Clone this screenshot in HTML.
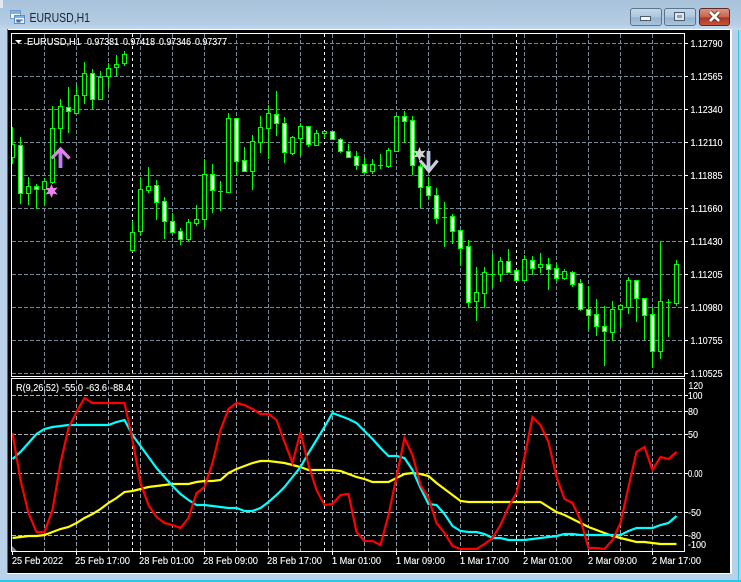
<!DOCTYPE html>
<html>
<head>
<meta charset="utf-8">
<title>EURUSD,H1</title>
<style>
html,body{margin:0;padding:0;background:#b9d2ea;width:741px;height:582px;overflow:hidden}
svg{display:block}
text{font-family:"Liberation Sans",sans-serif;font-size:10.500px;fill:#fff;stroke:#fff;stroke-width:.12px}
</style>
</head>
<body>
<svg width="741" height="582" viewBox="0 0 741 582" xmlns="http://www.w3.org/2000/svg">
<defs>
<linearGradient id="bg" x1="0" y1="0" x2="0" y2="1"><stop offset="0" stop-color="#a7c2da"/><stop offset=".8" stop-color="#b4cde4"/><stop offset="1" stop-color="#c5d9ed"/></linearGradient>
<linearGradient id="btn" x1="0" y1="0" x2="0" y2="1"><stop offset="0" stop-color="#c4d8ea"/><stop offset=".5" stop-color="#adc6dd"/><stop offset=".55" stop-color="#94b3cf"/><stop offset="1" stop-color="#a9c5de"/></linearGradient>
<linearGradient id="cls" x1="0" y1="0" x2="0" y2="1"><stop offset="0" stop-color="#dd9686"/><stop offset=".5" stop-color="#c9624e"/><stop offset=".55" stop-color="#ad3520"/><stop offset="1" stop-color="#c25843"/></linearGradient>
<clipPath id="pc"><rect x="12" y="34" width="672" height="342"/></clipPath>
<clipPath id="ic"><rect x="12" y="380" width="672" height="171"/></clipPath>
</defs>

<rect width="741" height="582" fill="#b9d2ea"/>
<rect width="741" height="30" fill="url(#bg)"/>
<rect x="0" y="580" width="741" height="2" fill="#2cc6e6"/>
<rect x="738" y="30" width="1" height="552" fill="#2cc6e6"/>
<rect x="0" y="0" width="3" height="8" fill="#dfe9f2"/>

<!-- window client -->
<rect x="7" y="29" width="725" height="545" fill="#fff"/>
<rect x="7" y="29" width="1" height="544" fill="#666"/>
<rect x="8" y="30" width="722" height="543" fill="#000"/>

<!-- title -->
<g shape-rendering="crispEdges">
<rect x="10.500" y="10.500" width="10" height="8" fill="#fff" stroke="#6f9bd0"/>
<rect x="11" y="11" width="9" height="3" fill="#7fb0e4"/>
<rect x="14.500" y="15.500" width="10" height="8" fill="#eef5fc" stroke="#5f8cc4"/>
<rect x="15" y="16" width="9" height="2" fill="#7fb0e4"/>
<path d="M16 20h1v2h1v-2h1v2h1v-2h2v1" fill="none" stroke="#3d6fae"/>
</g>
<text x="29.500" y="22" style="font-size:13px;fill:#1c2233;stroke:none" textLength="60.500" lengthAdjust="spacingAndGlyphs">EURUSD,H1</text>

<!-- buttons -->
<rect x="630.500" y="8.500" width="31" height="17" rx="2.500" fill="url(#btn)" stroke="#5f7488"/>
<rect x="664.500" y="8.500" width="31" height="17" rx="2.500" fill="url(#btn)" stroke="#5f7488"/>
<rect x="699.500" y="8.500" width="30" height="17" rx="2.500" fill="url(#cls)" stroke="#5c2a26"/>
<g shape-rendering="crispEdges">
<rect x="640.500" y="16.500" width="10" height="4" fill="#f2f5f8" stroke="#4a5b6c"/>
<rect x="674.500" y="12.500" width="10" height="8" fill="#dfe6ee" stroke="#4a5b6c"/>
<rect x="677" y="15" width="5" height="3" fill="#8ea6bc"/>
</g>
<path d="M710 12l9 9M719 12l-9 9" stroke="#4a2620" stroke-width="4.400" fill="none"/>
<path d="M710 12l9 9M719 12l-9 9" stroke="#fff" stroke-width="2.800" fill="none"/>

<!-- price panel grid -->
<g shape-rendering="crispEdges" fill="none">
<path stroke="#778899" stroke-dasharray="4 2" d="M12 43.500H684M12 76.500H684M12 109.500H684M12 142.500H684M12 175.500H684M12 208.500H684M12 241.500H684M12 274.500H684M12 307.500H684M12 340.500H684M12 373.500H684"/>
<path stroke="#778899" stroke-dasharray="4 2" d="M44.500 34V376M76.500 34V376M108.500 34V376M140.500 34V376M172.500 34V376M204.500 34V376M236.500 34V376M268.500 34V376M300.500 34V376M332.500 34V376M364.500 34V376M396.500 34V376M428.500 34V376M460.500 34V376M492.500 34V376M524.500 34V376M556.500 34V376M588.500 34V376M620.500 34V376M652.500 34V376"/>
<path stroke="#fff" stroke-dasharray="3 3" d="M132.500 34V376M324.500 34V376M516.500 34V376"/>
</g>

<!-- candles -->
<g clip-path="url(#pc)" shape-rendering="crispEdges">
<path fill="none" stroke="#00ff00" d="M12.500 127V164M20.500 137V204M28.500 177V205M36.500 184V209M44.500 178V206M52.500 106V184M60.500 99V143M68.500 87V133M76.500 85V113M84.500 62V104M92.500 69V109M100.500 71V99M108.500 63V88M116.500 55V76M124.500 51V66M132.500 221V252M140.500 177V235M148.500 167V193M156.500 180V220M164.500 197V239M172.500 213V234M180.500 228V245M188.500 219V241M196.500 205V226M204.500 159V227M212.500 164V213M220.500 181V211M228.500 113V193M236.500 118V176M244.500 147V172M252.500 135V190M260.500 116V153M268.500 105V159M276.500 91V136M284.500 117V163M292.500 136V155M300.500 123V156M308.500 126V147M316.500 130V146M324.500 131V138M332.500 131V139M340.500 138V153M348.500 144V157M356.500 151V170M364.500 157V172M372.500 159V174M380.500 154V169M388.500 148V168M396.500 115V151M404.500 111V143M412.500 116V175M420.500 164V208M428.500 177V199M436.500 188V224M444.500 202V247M452.500 214V244M460.500 230V265M468.500 240V308M476.500 267V321M484.500 267V308M492.500 254V288M500.500 257V282M508.500 249V273M516.500 270V280M524.500 255V280M532.500 256V275M540.500 253V273M548.500 258V290M556.500 263V281M564.500 269V280M572.500 271V287M580.500 279V311M588.500 286V330M596.500 299V336M604.500 306V366M612.500 301V341M620.500 304V328M628.500 277V314M636.500 280V322M644.500 298V340M652.500 308V368M660.500 242V359M668.500 299V337M676.500 260V306"/>
<path fill="#000" stroke="#00ff00" d="M10.500 144.500h4v13h-4zM26.500 186.500h4v7h-4zM42.500 181.500h4v8h-4zM50.500 128.500h4v54h-4zM58.500 106.500h4v22h-4zM74.500 95.500h4v18h-4zM82.500 73.500h4v22h-4zM98.500 77.500h4v22h-4zM106.500 68.500h4v8h-4zM114.500 64.500h4v3h-4zM122.500 54.500h4v9h-4zM130.500 232.500h4v18h-4zM138.500 189.500h4v42h-4zM146.500 186.500h4v4h-4zM186.500 222.500h4v17h-4zM194.500 219.500h4v4h-4zM202.500 174.500h4v45h-4zM226.500 118.500h4v74h-4zM250.500 141.500h4v30h-4zM258.500 127.500h4v15h-4zM266.500 113.500h4v15h-4zM290.500 137.500h4v16h-4zM298.500 126.500h4v12h-4zM314.500 133.500h4v12h-4zM322.500 131.500h4v2h-4zM370.500 164.500h4v7h-4zM386.500 150.500h4v16h-4zM394.500 116.500h4v35h-4zM474.500 292.500h4v9h-4zM482.500 272.500h4v21h-4zM498.500 261.500h4v13h-4zM522.500 259.500h4v21h-4zM538.500 264.500h4v3h-4zM562.500 271.500h4v7h-4zM610.500 309.500h4v23h-4zM618.500 305.500h4v4h-4zM626.500 280.500h4v27h-4zM658.500 301.500h4v50h-4zM674.500 264.500h4v39h-4z"/>
<path fill="#fff" stroke="#00ff00" d="M18.500 145.500h4v48h-4zM34.500 186.500h4v3h-4zM66.500 107.500h4v4h-4zM90.500 73.500h4v26h-4zM154.500 185.500h4v17h-4zM162.500 201.500h4v20h-4zM170.500 221.500h4v11h-4zM178.500 231.500h4v8h-4zM210.500 174.500h4v16h-4zM234.500 118.500h4v43h-4zM242.500 160.500h4v11h-4zM274.500 114.500h4v9h-4zM282.500 123.500h4v29h-4zM306.500 126.500h4v18h-4zM330.500 131.500h4v8h-4zM338.500 139.500h4v12h-4zM346.500 151.500h4v6h-4zM354.500 156.500h4v9h-4zM362.500 164.500h4v8h-4zM402.500 116.500h4v5h-4zM410.500 120.500h4v45h-4zM418.500 166.500h4v21h-4zM426.500 186.500h4v9h-4zM434.500 195.500h4v23h-4zM450.500 216.500h4v15h-4zM458.500 230.500h4v18h-4zM466.500 246.500h4v56h-4zM506.500 261.500h4v11h-4zM514.500 270.500h4v10h-4zM530.500 260.500h4v8h-4zM546.500 264.500h4v5h-4zM554.500 268.500h4v10h-4zM570.500 272.500h4v12h-4zM578.500 283.500h4v26h-4zM586.500 309.500h4v6h-4zM594.500 314.500h4v12h-4zM602.500 326.500h4v5h-4zM634.500 280.500h4v18h-4zM642.500 298.500h4v17h-4zM650.500 314.500h4v37h-4z"/>
<path fill="none" stroke="#00ff00" d="M218 191.500h5M378 165.500h5M442 217.500h5M490 274.500h5M666 302.500h5"/>
</g>

<!-- arrows and stars -->
<path d="M60.500 168V150" stroke="#c47cf2" stroke-width="3.800" fill="none"/>
<path d="M51.500 158.500L60.500 149L69.500 158.500" stroke="#e082ea" stroke-width="3.200" fill="none"/>
<polygon points="51.500,184 53.200,188.200 57.800,187.400 54.800,191 57.800,194.600 53.200,193.800 51.500,198 49.800,193.800 45.200,194.600 48.200,191 45.200,187.400 49.800,188.200" fill="#ee82ee"/>
<polygon points="419.500,147 421.200,151.200 425.800,150.400 422.800,154 425.800,157.600 421.200,156.800 419.500,161 417.800,156.800 413.200,157.600 416.200,154 413.200,150.400 417.800,151.200" fill="#d3d3d3"/>
<path d="M428.500 151V170" stroke="#b9c6e0" stroke-width="3.800" fill="none"/>
<path d="M420 160.500L429 171L437.500 160.500" stroke="#c8d0e0" stroke-width="3.200" fill="none"/>

<!-- indicator grid -->
<g shape-rendering="crispEdges" fill="none">
<path stroke="#aab4bd" stroke-dasharray="4 2" d="M12 395.500H684M12 411.500H684M12 434.500H684M12 473.500H684M12 512.500H684M12 535.500H684"/>
<path stroke="#8f9dab" stroke-dasharray="4 2" d="M44.500 380V551M76.500 380V551M108.500 380V551M140.500 380V551M172.500 380V551M204.500 380V551M236.500 380V551M268.500 380V551M300.500 380V551M332.500 380V551M364.500 380V551M396.500 380V551M428.500 380V551M460.500 380V551M492.500 380V551M524.500 380V551M556.500 380V551M588.500 380V551M620.500 380V551M652.500 380V551"/>
<path stroke="#fff" stroke-dasharray="3 3" d="M132.500 380V551M324.500 380V551M516.500 380V551"/>
</g>
<polygon points="12,546 17,551 12,551" fill="#778899"/>

<!-- indicator lines -->
<g clip-path="url(#ic)" fill="none" stroke-width="2.200" stroke-linejoin="miter">
<polyline stroke="#ffff00" points="12.500,538 20.500,537 28.500,536 36.500,536 44.500,535 52.500,532 60.500,529 68.500,527 76.500,523 84.500,518 92.500,514 100.500,509 108.500,503 116.500,498 124.500,492 132.500,491 140.500,489 148.500,487 156.500,486 164.500,485 172.500,484 180.500,484 188.500,484 196.500,482 204.500,481 212.500,481 220.500,480 228.500,473 236.500,469 244.500,466 252.500,463 260.500,461 268.500,461 276.500,462 284.500,463 292.500,465 300.500,467 308.500,470 316.500,470 324.500,470 332.500,470 340.500,471 348.500,474 356.500,477 364.500,479 372.500,482 380.500,482 388.500,482 396.500,478 404.500,474 412.500,473 420.500,474 428.500,476 436.500,483 444.500,489 452.500,495 460.500,501 468.500,502 476.500,502 484.500,502 492.500,502 500.500,502 508.500,502 516.500,502 524.500,502 532.500,502 540.500,502 548.500,507 556.500,512 564.500,515 572.500,519 580.500,523 588.500,527 596.500,530 604.500,533 612.500,536 620.500,538 628.500,540 636.500,542 644.500,542 652.500,543 660.500,544 668.500,544 676.500,544"/>
<polyline stroke="#00ffff" points="12.500,459 20.500,452 28.500,443 36.500,434 44.500,429 52.500,427 60.500,426 68.500,425 76.500,425 84.500,425 92.500,425 100.500,425 108.500,425 116.500,422 124.500,420 132.500,435 140.500,446 148.500,457 156.500,468 164.500,477 172.500,486 180.500,494 188.500,500 196.500,505 204.500,505 212.500,506 220.500,507 228.500,508 236.500,508 244.500,511 252.500,511 260.500,508 268.500,502 276.500,495 284.500,487 292.500,477 300.500,467 308.500,453 316.500,440 324.500,427 332.500,413 340.500,416 348.500,419 356.500,423 364.500,431 372.500,439 380.500,448 388.500,456 396.500,456 404.500,458 412.500,470 420.500,488 428.500,504 436.500,505 444.500,514 452.500,526 460.500,531 468.500,532 476.500,532 484.500,534 492.500,538 500.500,538 508.500,540 516.500,540 524.500,540 532.500,539 540.500,538 548.500,537 556.500,536 564.500,534 572.500,534 580.500,535 588.500,535 596.500,535 604.500,535 612.500,535 620.500,535 628.500,531 636.500,528 644.500,528 652.500,528 660.500,525 668.500,523 676.500,516"/>
<polyline stroke="#ff0000" points="12.500,433 20.500,480 28.500,513 36.500,532 44.500,532 52.500,510 60.500,463 68.500,428 76.500,412 84.500,398 92.500,403 100.500,403 108.500,403 116.500,403 124.500,403 132.500,440 140.500,483 148.500,505 156.500,517 164.500,523 172.500,525 180.500,528 188.500,518 196.500,493 204.500,487 212.500,463 220.500,430 228.500,409 236.500,403 244.500,405 252.500,409 260.500,414 268.500,414 276.500,420 284.500,442 292.500,463 300.500,432 308.500,465 316.500,490 324.500,505 332.500,504 340.500,495 348.500,494 356.500,532 364.500,541 372.500,541 380.500,545 388.500,515 396.500,477 404.500,438 412.500,455 420.500,485 428.500,498 436.500,523 444.500,533 452.500,546 460.500,549 468.500,549 476.500,549 484.500,544 492.500,538 500.500,525 508.500,507 516.500,493 524.500,457 532.500,417 540.500,425 548.500,442 556.500,477 564.500,499 572.500,503 580.500,520 588.500,548 596.500,548 604.500,549 612.500,540 620.500,523 628.500,487 636.500,452 644.500,447 652.500,470 660.500,457 668.500,459 676.500,452"/>
</g>

<!-- frames -->
<g shape-rendering="crispEdges" fill="none" stroke="#fff">
<path d="M11.500 33.500H684.500V376.500H11.500ZM11.500 378.500H684.500V551.500H11.500Z"/>
<path d="M685 43.500h3M685 76.500h3M685 109.500h3M685 142.500h3M685 175.500h3M685 208.500h3M685 241.500h3M685 274.500h3M685 307.500h3M685 340.500h3M685 373.500h3M685 395.500h3M685 411.500h3M685 434.500h3M685 473.500h3M685 512.500h3M685 535.500h3"/>
<path d="M12.500 552v3M76.500 552v3M140.500 552v3M204.500 552v3M268.500 552v3M332.500 552v3M396.500 552v3M460.500 552v3M524.500 552v3M588.500 552v3M652.500 552v3"/>
</g>

<!-- header labels -->
<polygon points="15,40 22,40 18.500,43.500" fill="#fff"/>
<g lengthAdjust="spacingAndGlyphs">
<text x="27" y="45" textLength="54" lengthAdjust="spacingAndGlyphs">EURUSD,H1</text>
<text x="87" y="45" textLength="32" lengthAdjust="spacingAndGlyphs">0.97381</text>
<text x="123" y="45" textLength="32" lengthAdjust="spacingAndGlyphs">0.97418</text>
<text x="159" y="45" textLength="32" lengthAdjust="spacingAndGlyphs">0.97346</text>
<text x="195" y="45" textLength="32" lengthAdjust="spacingAndGlyphs">0.97377</text>

<text x="16" y="391" textLength="43" lengthAdjust="spacingAndGlyphs">R(9,26,52)</text>
<text x="62" y="391" textLength="21" lengthAdjust="spacingAndGlyphs">-55.0</text>
<text x="86" y="391" textLength="21" lengthAdjust="spacingAndGlyphs">-63.6</text>
<text x="110" y="391" textLength="21" lengthAdjust="spacingAndGlyphs">-88.4</text>

<!-- price labels -->
<text x="690.500" y="47" textLength="32" lengthAdjust="spacingAndGlyphs">1.12790</text>
<text x="690.500" y="80" textLength="32" lengthAdjust="spacingAndGlyphs">1.12565</text>
<text x="690.500" y="113" textLength="32" lengthAdjust="spacingAndGlyphs">1.12340</text>
<text x="690.500" y="146" textLength="32" lengthAdjust="spacingAndGlyphs">1.12110</text>
<text x="690.500" y="179" textLength="32" lengthAdjust="spacingAndGlyphs">1.11885</text>
<text x="690.500" y="212" textLength="32" lengthAdjust="spacingAndGlyphs">1.11660</text>
<text x="690.500" y="245" textLength="32" lengthAdjust="spacingAndGlyphs">1.11430</text>
<text x="690.500" y="278" textLength="32" lengthAdjust="spacingAndGlyphs">1.11205</text>
<text x="690.500" y="311" textLength="32" lengthAdjust="spacingAndGlyphs">1.10980</text>
<text x="690.500" y="344" textLength="32" lengthAdjust="spacingAndGlyphs">1.10755</text>
<text x="690.500" y="377" textLength="32" lengthAdjust="spacingAndGlyphs">1.10525</text>

<!-- indicator labels -->
<text x="688.500" y="389" textLength="14.500" lengthAdjust="spacingAndGlyphs">120</text>
<text x="688" y="399" textLength="14.500" lengthAdjust="spacingAndGlyphs">100</text>
<text x="688" y="415" textLength="10" lengthAdjust="spacingAndGlyphs">80</text>
<text x="688" y="438" textLength="10" lengthAdjust="spacingAndGlyphs">50</text>
<text x="688" y="477" textLength="14.500" lengthAdjust="spacingAndGlyphs">0.00</text>
<text x="688" y="516" textLength="13" lengthAdjust="spacingAndGlyphs">-50</text>
<text x="688" y="539" textLength="13" lengthAdjust="spacingAndGlyphs">-80</text>
<text x="688" y="548" textLength="18" lengthAdjust="spacingAndGlyphs">-100</text>

<!-- time labels -->
<text x="12" y="564" textLength="51" lengthAdjust="spacingAndGlyphs">25 Feb 2022</text>
<text x="75" y="564" textLength="55" lengthAdjust="spacingAndGlyphs">25 Feb 17:00</text>
<text x="139" y="564" textLength="55" lengthAdjust="spacingAndGlyphs">28 Feb 01:00</text>
<text x="203" y="564" textLength="55" lengthAdjust="spacingAndGlyphs">28 Feb 09:00</text>
<text x="267" y="564" textLength="55" lengthAdjust="spacingAndGlyphs">28 Feb 17:00</text>
<text x="332" y="564" textLength="49" lengthAdjust="spacingAndGlyphs">1 Mar 01:00</text>
<text x="396" y="564" textLength="49" lengthAdjust="spacingAndGlyphs">1 Mar 09:00</text>
<text x="460" y="564" textLength="49" lengthAdjust="spacingAndGlyphs">1 Mar 17:00</text>
<text x="523" y="564" textLength="49" lengthAdjust="spacingAndGlyphs">2 Mar 01:00</text>
<text x="588" y="564" textLength="49" lengthAdjust="spacingAndGlyphs">2 Mar 09:00</text>
<text x="652" y="564" textLength="49" lengthAdjust="spacingAndGlyphs">2 Mar 17:00</text>
</g>
</svg>
</body>
</html>
